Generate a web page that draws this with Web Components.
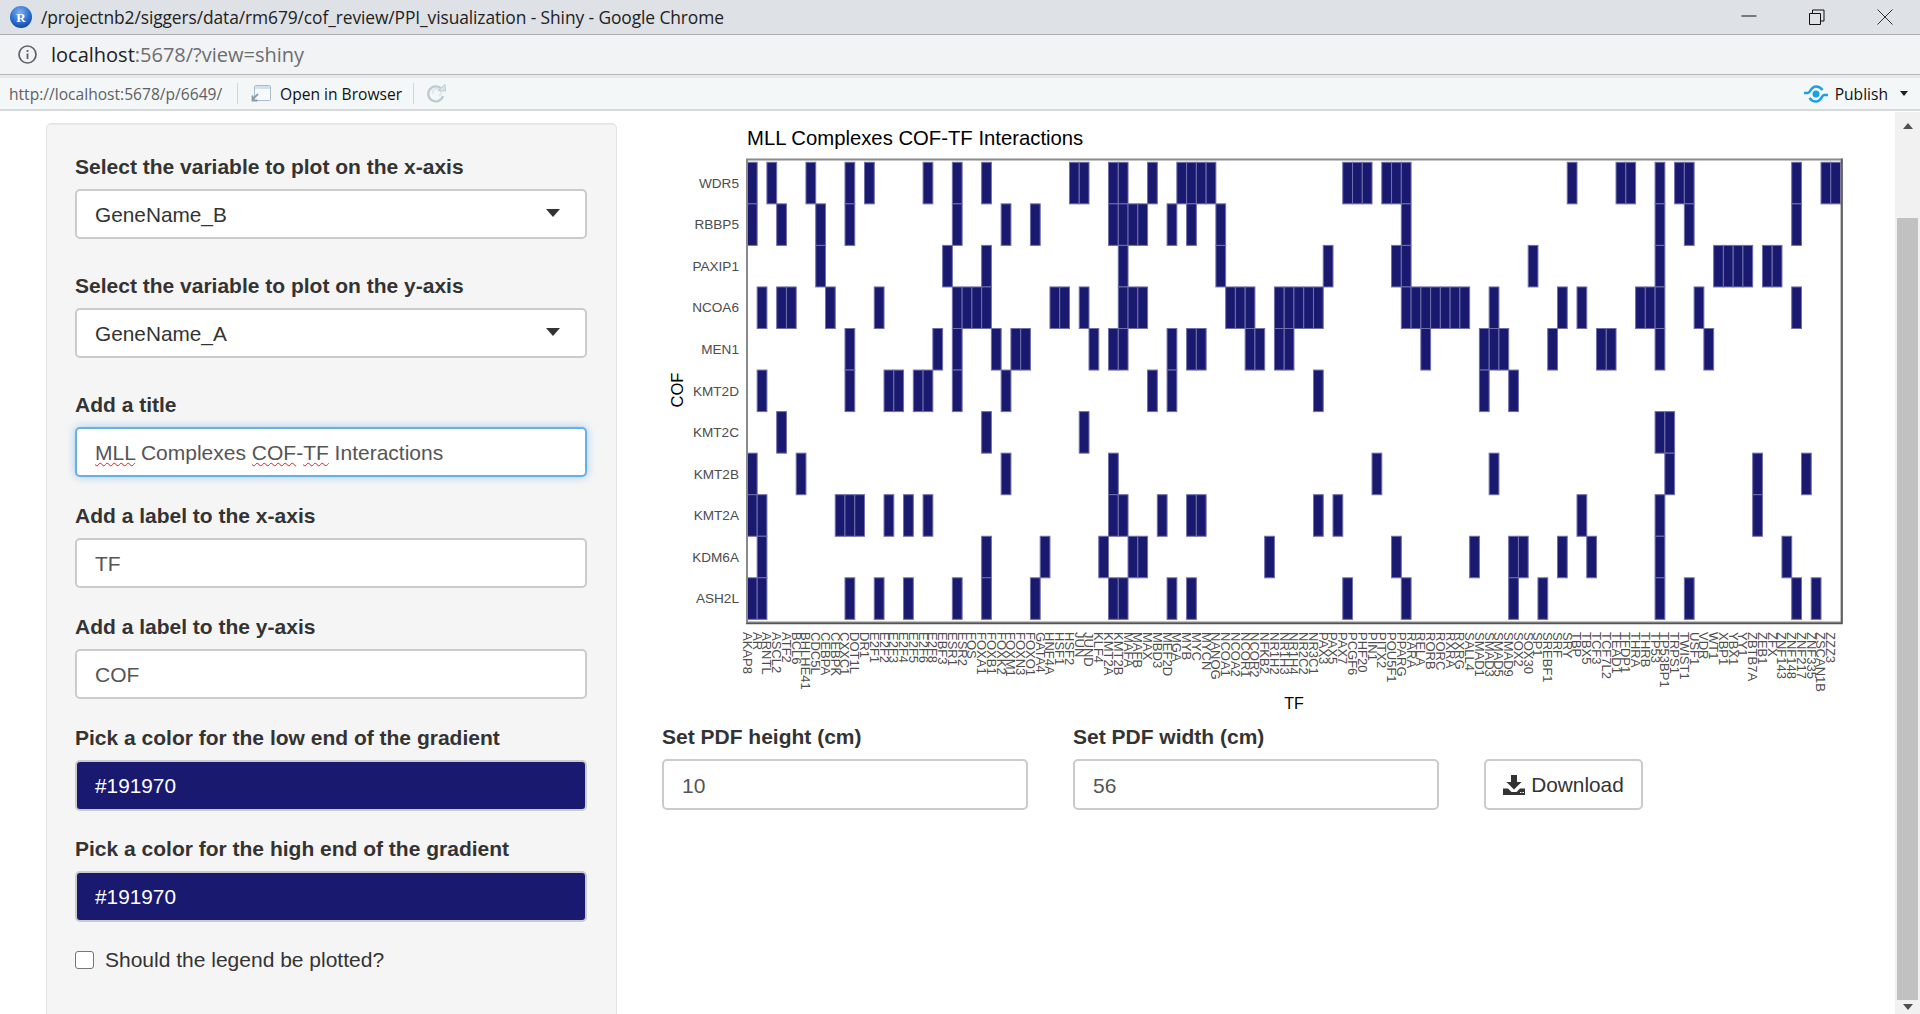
<!DOCTYPE html>
<html>
<head>
<meta charset="utf-8">
<title>Shiny</title>
<style>
    html, body { margin: 0; height: 100%; overflow: hidden; background: #fff; }
    body { display: flex; flex-direction: column; font-family: "Liberation Sans", Arial, sans-serif; }
</style>
</head>
<body>
<window-titlebar>/projectnb2/siggers/data/rm679/cof_review/PPI_visualization - Shiny - Google Chrome</window-titlebar>
<address-bar></address-bar>
<viewer-toolbar></viewer-toolbar>
<shiny-page>
    <side-panel>
        <form-field label="Select the variable to plot on the x-axis" gap="33"><select-box>GeneName_B</select-box></form-field>
        <form-field label="Select the variable to plot on the y-axis" gap="33"><select-box>GeneName_A</select-box></form-field>
        <form-field label="Add a title"><text-box focused><span class="sp">MLL</span> Complexes <span class="sp">COF</span>-<span class="sp">TF</span> Interactions</text-box></form-field>
        <form-field label="Add a label to the x-axis"><text-box>TF</text-box></form-field>
        <form-field label="Add a label to the y-axis"><text-box>COF</text-box></form-field>
        <form-field label="Pick a color for the low end of the gradient" gap="24"><color-box>#191970</color-box></form-field>
        <form-field label="Pick a color for the high end of the gradient" gap="24"><color-box>#191970</color-box></form-field>
        <check-box>Should the legend be plotted?</check-box>
    </side-panel>
    <main-panel>
        <heat-plot></heat-plot>
        <pdf-controls></pdf-controls>
    </main-panel>
    <page-scrollbar></page-scrollbar>
</shiny-page>

<script>
// chrome window title row
class WindowTitlebar extends HTMLElement {
    constructor() {
        super();
        this.attachShadow({ mode: 'open' });
        this.shadowRoot.innerHTML = `
            <style>
                :host { display: flex; align-items: center; height: 34px; background: #dee1e6; border-bottom: 1px solid #adadad; flex: none; color: #222; font: 17.400px "Open Sans", sans-serif; }
                svg { flex: none; display: block; }
                .logo { margin: 0 8px 0 9px; }
                .text { flex: 1; white-space: nowrap; letter-spacing: -0.1px; }
                .btns { display: flex; gap: 52px; padding-right: 27px; align-items: center; }
            </style>
            <svg class="logo" width="24" height="24" viewBox="0 0 24 24">
                <defs><radialGradient id="g" cx="45%" cy="30%" r="75%"><stop offset="0" stop-color="#7fb2ee"/><stop offset=".6" stop-color="#2a6fd0"/><stop offset="1" stop-color="#123f96"/></radialGradient></defs>
                <circle cx="12" cy="12" r="11" fill="url(#g)"/>
                <text x="12" y="16.500" text-anchor="middle" font-family="Liberation Serif" font-weight="bold" font-size="13" fill="#fff">R</text>
            </svg>
            <span class="text"><slot></slot></span>
            <div class="btns">
                <svg width="16" height="16" viewBox="0 0 16 16"><path d="M0.500 7h15" stroke="#111" fill="none"/></svg>
                <svg width="16" height="16" viewBox="0 0 16 16"><path d="M0.500 4.500h11v11h-11zM3.500 4.500v-3.500h11.500v11h-3.500" stroke="#111" fill="none"/></svg>
                <svg width="16" height="16" viewBox="0 0 16 16"><path d="M0.500 0.500l15 15M15.500 0.500l-15 15" stroke="#333" fill="none"/></svg>
            </div>`;
    }
}

class AddressBar extends HTMLElement {
    constructor() {
        super();
        this.attachShadow({ mode: 'open' });
        this.shadowRoot.innerHTML = `
            <style>
                :host { display: flex; align-items: center; height: 39px; background: #f1f3f4; border-bottom: 1px solid #b4b4b4; flex: none; font: 20px "Open Sans", sans-serif; color: #6b6e70; }
                svg { margin: 0 13px 0 17px; flex: none; }
                b { font-weight: 400; color: #202124; }
            </style>
            <svg width="21" height="21" viewBox="0 0 21 21"><circle cx="10.500" cy="10.500" r="8.500" fill="none" stroke="#5f6368" stroke-width="1.700"/><path d="M10.500 9.500v5.500M10.500 6v2" stroke="#5f6368" stroke-width="1.800"/></svg>
            <span><b>localhost</b>:5678/?view=shiny</span>`;
    }
}

// rstudio viewer strip
class ViewerToolbar extends HTMLElement {
    constructor() {
        super();
        this.attachShadow({ mode: 'open' });
        this.shadowRoot.innerHTML = `
            <style>
                :host { display: flex; align-items: center; height: 31px; background: #f4f7f8; border-top: 3px solid #e7e9ea; border-bottom: 2px solid #d6d9da; margin-bottom: 1px; flex: none; font: 15.600px "Open Sans", sans-serif; color: #111; white-space: nowrap; }
                .url { color: #5d6164; margin-left: 9px; width: 228px; }
                .sep { width: 1px; height: 21px; background: #d3d6d8; flex: none; }
                .open { display: flex; align-items: center; gap: 9px; margin-left: 11px; width: 164px; }
                svg { flex: none; display: block; }
                .re { margin-left: 11px; }
                .pub { margin-left: auto; display: flex; align-items: center; padding-right: 12px; }
                .pub span { margin: 0 12px 0 7px; }
                .caret { width: 0; height: 0; border: 4px solid transparent; border-top: 5px solid #222; border-bottom: 0; }
            </style>
            <span class="url">http://localhost:5678/p/6649/</span>
            <span class="sep"></span>
            <span class="open">
                <svg width="22" height="18" viewBox="0 0 22 18"><rect x="5.500" y="0.500" width="16" height="15" rx="1" fill="#f7fafc" stroke="#a9bccb"/><path d="M6 1h15v3H6z" fill="#cfe0ee"/><path d="M9 9L3 15M3.500 10.500v5h5" fill="none" stroke="#8b9aa6" stroke-width="1.800"/></svg>
                <span>Open in Browser</span>
            </span>
            <span class="sep"></span>
            <svg class="re" width="22" height="19" viewBox="0 0 22 19"><path d="M16.500 5A7.500 7.500 0 1 0 18 12" fill="none" stroke="#bccad4" stroke-width="2.400"/><path d="M8 9.500a4 4 0 1 1 6 2.500" fill="none" stroke="#dbe4ea" stroke-width="1.500"/><path d="M13 6.500L20.500 7 20 0.500z" fill="#dce5eb" stroke="#bccad4"/></svg>
            <div class="pub">
                <svg width="24" height="20" viewBox="0 0 24 20"><path d="M0 9H4C6.500 9 6.500 2.500 12 2.500C15 2.500 17 4 18.500 6M24 11H20C17.500 11 17.500 17.500 12 17.500C9 17.500 7 16 5.500 14" fill="none" stroke="#1ba0e8" stroke-width="2.500"/><circle cx="12" cy="10" r="3.500" fill="#1ba0e8"/></svg>
                <span>Publish</span>
                <i class="caret"></i>
            </div>`;
    }
}

class ShinyPage extends HTMLElement {
    constructor() {
        super();
        this.attachShadow({ mode: 'open' });
        this.shadowRoot.innerHTML = `
            <style>:host { display: flex; flex: 1; min-height: 0; overflow: hidden; align-items: flex-start; color: #333; font-size: 21px; }</style>
            <slot></slot>`;
    }
}

class SidePanel extends HTMLElement {
    constructor() {
        super();
        this.attachShadow({ mode: 'open' });
        this.shadowRoot.innerHTML = `
            <style>
                :host { display: block; flex: none; box-sizing: border-box; width: 571px; height: 960px; margin: 11px 0 0 46px; padding: 29px 29px 29px 28px; background: #f5f5f5; border: 1px solid #e3e3e3; border-radius: 5px; box-shadow: inset 0 1px 1px rgba(0,0,0,.05); }
            </style>
            <slot></slot>`;
    }
}

class MainPanel extends HTMLElement {
    constructor() {
        super();
        this.attachShadow({ mode: 'open' });
        this.shadowRoot.innerHTML = `
            <style>:host { display: block; flex: none; width: 1233px; margin-left: 45px; }</style>
            <slot></slot>`;
    }
}

// label + control, gap is the space under the control
class FormField extends HTMLElement {
    connectedCallback() {
        if (this.shadowRoot) return;
        this.attachShadow({ mode: 'open' });
        const gap = this.getAttribute('gap') || 25;
        this.shadowRoot.innerHTML = `
            <style>
                :host { display: block; margin-bottom: ${gap}px; }
                label { display: block; height: 28px; line-height: 28px; margin-bottom: 8px; font-weight: 700; font-size: 21px; color: #333; white-space: nowrap; }
            </style>
            <label>${this.getAttribute('label')}</label>
            <slot></slot>`;
    }
}

class SelectBox extends HTMLElement {
    constructor() {
        super();
        this.attachShadow({ mode: 'open' });
        this.shadowRoot.innerHTML = `
            <style>
                :host { display: flex; align-items: center; justify-content: space-between; box-sizing: border-box; height: 50px; padding: 2px 25px 0 18px; background: #fff; border: 2px solid #cbcbcb; border-radius: 5px; color: #333; font-size: 20.800px; }
                i { width: 0; height: 0; border: 7.500px solid transparent; border-top: 8px solid #333; border-bottom: 0; margin-top: -5px; }
            </style>
            <span><slot></slot></span><i></i>`;
    }
}

class TextBox extends HTMLElement {
    constructor() {
        super();
        this.attachShadow({ mode: 'open' });
        this.shadowRoot.innerHTML = `
            <style>
                :host { display: flex; align-items: center; box-sizing: border-box; height: 50px; padding: 2px 18px 0; background: #fff; border: 2px solid #cbcbcb; border-radius: 5px; color: #555; font-size: 21px; white-space: nowrap; }
                :host([focused]) { border-color: #66afe9; box-shadow: 0 0 8px rgba(102,175,233,.6); }
                ::slotted(.sp) { text-decoration: underline wavy #e0201c 1px; text-underline-offset: 2px; }
            </style>
            <span><slot></slot></span>`;
    }
}

class ColorBox extends HTMLElement {
    constructor() {
        super();
        this.attachShadow({ mode: 'open' });
        this.shadowRoot.innerHTML = `
            <style>
                :host { display: flex; align-items: center; box-sizing: border-box; height: 51px; padding: 0 18px; background: #191970; border: 2px solid #cbcbcb; border-radius: 5px; color: #fff; font-size: 20.800px; }
            </style>
            <slot></slot>`;
    }
}

class CheckBox extends HTMLElement {
    constructor() {
        super();
        this.attachShadow({ mode: 'open' });
        this.shadowRoot.innerHTML = `
            <style>
                :host { display: flex; align-items: center; height: 28px; color: #333; font-size: 21px; white-space: nowrap; }
                i { box-sizing: border-box; width: 19px; height: 18px; background: #fff; border: 1.500px solid #767676; border-radius: 3px; margin-right: 11px; flex: none; }
            </style>
            <i></i><span><slot></slot></span>`;
    }
}

// heatmap: rows top to bottom, each row lists the filled TF columns
const ROWS = [
    ['WDR5', [0,2,6,10,12,18,21,24,33,34,37,38,41,44,45,46,47,61,62,63,65,66,67,84,89,90,93,95,96,107,110,111]],
    ['RBBP5', [0,3,7,10,21,26,29,37,38,39,40,43,45,48,67,93,96,107]],
    ['PAXIP1', [7,20,24,38,48,59,66,67,80,93,99,100,101,102,104,105]],
    ['NCOA6', [1,3,4,8,13,21,22,23,24,31,32,34,38,39,40,49,50,51,54,55,56,57,58,67,68,69,70,71,72,73,76,83,85,91,92,93,97,107]],
    ['MEN1', [10,19,21,25,27,28,35,37,38,43,45,46,51,52,54,55,69,75,76,77,82,87,88,93,98]],
    ['KMT2D', [1,10,14,15,17,18,21,26,41,43,58,75,78]],
    ['KMT2C', [3,24,34,93,94]],
    ['KMT2B', [0,5,26,37,64,76,94,103,108]],
    ['KMT2A', [0,1,9,10,11,14,16,18,37,38,42,45,46,58,60,85,93,103]],
    ['KDM6A', [1,24,30,36,39,40,53,66,74,78,79,83,86,93,106]],
    ['ASH2L', [0,1,10,13,16,21,24,29,37,38,43,45,61,67,78,81,93,96,107,109]]
];

const TFS = ['AKAP8','AR','ARNTL','ASCL2','ATF2','BCL6','BHLHE41','CDC5L','CEBPA','CEBPK','CXXC1','DOT1L','DR1',
    'E2F1','E2F2','E2F3','E2F4','E2F5','E2F6','E2F8','EBF3','ESR1','ESR2','FOS','FOXA1','FOXB1','FOXK2','FOXM1','FOXN3','FOXO1',
    'GATA4','HNF4A','HSF1','HSF2','JUN','JUND','KLF4','KMT2A','KMT2B','MAFA','MAFB','MAX','MBD3','MEF2D','MGA','MYB','MYC','MYCN',
    'NANOG','NCOA1','NCOA2','NCOR1','NCOR2','NFKB2','NR1H2','NR1H3','NR1H4','NR2C2','NR3C1','PAX3','PAX5','PAX7','PCGF6','PHF20','PIN1','PITX2',
    'POU5F1','PPARG','RARA','RELA','RORB','RORC','RXRA','RXRG','SALL4','SMAD1','SMAD3','SMAD5','SMAD9','SOX2','SOX30','SP1','SREBF1','SRF','SRY',
    'TBP','TBX5','TCF3','TCF7L2','TEAD1','TFDP1','THRA','THRB','TP53','TP53BP1','TRPS1','TWIST1','USF1','VDR','WT1','XBP1','YBX1','YY1',
    'ZBTB7A','ZEB1','ZFX','ZNF143','ZNF148','ZNF217','ZNF335','ZSCAN1B','ZZZ3'];

class HeatPlot extends HTMLElement {
    constructor() {
        super();
        this.attachShadow({ mode: 'open' });
    }

    connectedCallback() {
        const x0 = 747.4, y0 = 162.3, cw = 9.76, rh = 41.55;
        let cells = '', rowText = '', colText = '';
        ROWS.forEach(([name, cols], r) => {
            const y = y0 + r * rh;
            rowText += `<text x="739" y="${(y + rh / 2 + 4.7).toFixed(1)}" text-anchor="end">${name}</text>`;
            cols.forEach(c => {
                cells += `<rect x="${(x0 + c * cw).toFixed(2)}" y="${y.toFixed(2)}" width="${cw}" height="${rh}"/>`;
            });
        });
        TFS.forEach((name, c) => {
            const x = x0 + (c + 0.5) * cw - 9.4;
            colText += `<text transform="translate(${x.toFixed(2)} 632) rotate(90)">${name}</text>`;
        });
        this.shadowRoot.innerHTML = `
            <style>
                :host { display: block; height: 611px; }
                svg { display: block; font-family: "Liberation Sans", Arial, sans-serif; }
                .cells rect { fill: #191970; stroke: #6f6fab; stroke-width: 1; }
                .ticks { font-size: 13.600px; fill: #4d4d4d; }
            </style>
            <svg width="1233" height="611" viewBox="662 112 1233 611">
                <text x="747" y="145" font-size="20.300" fill="#000">MLL Complexes COF-TF Interactions</text>
                <g class="cells">${cells}</g>
                <path d="M747 159.500H1841.500V622.500H747Z" fill="none" stroke="#8a8a8a" stroke-width="2"/>
                <path d="M1842 158.500V623.500H746" fill="none" stroke="#555" stroke-width="1.500"/>
                <g class="ticks">${rowText}</g>
                <g class="ticks" style="font-size:13px">${colText}</g>
                <text transform="translate(683 390) rotate(-90)" text-anchor="middle" font-size="16.500" fill="#000">COF</text>
                <text x="1294" y="709" text-anchor="middle" font-size="16" fill="#000">TF</text>
            </svg>`;
    }
}

class PdfControls extends HTMLElement {
    constructor() {
        super();
        this.attachShadow({ mode: 'open' });
        this.shadowRoot.innerHTML = `
            <style>
                :host { display: flex; align-items: flex-end; gap: 45px; }
                form-field { width: 366px; margin: 0; }
                text-box { height: 51px; }
                button { box-sizing: border-box; width: 159px; height: 51px; display: flex; align-items: center; justify-content: center; gap: 6px; padding: 0; background: #fff; border: 2px solid #cbcbcb; border-radius: 5px; color: #333; font: 20.800px "Liberation Sans", sans-serif; }
                svg { display: block; }
            </style>
            <form-field label="Set PDF height (cm)" gap="0"><text-box>10</text-box></form-field>
            <form-field label="Set PDF width (cm)" gap="0"><text-box>56</text-box></form-field>
            <button>
                <svg width="22" height="20" viewBox="0 0 22 20"><path d="M8 0h6v7h4.500L11 14.500 3.500 7H8zM0 13.500h5L8.500 17h5L17 13.500h5V20H0z" fill="#333"/><path d="M17 17.500h1.500M19.500 17.500H21" stroke="#fff"/></svg>
                <span>Download</span>
            </button>`;
    }
}

class PageScrollbar extends HTMLElement {
    constructor() {
        super();
        this.attachShadow({ mode: 'open' });
        this.shadowRoot.innerHTML = `
            <style>
                :host { display: flex; flex-direction: column; align-items: center; flex: none; width: 25px; height: 902px; margin-left: auto; background: #f1f1f1; padding-top: 11px; box-sizing: border-box; }
                .up, .down { width: 0; height: 0; border: 5.500px solid transparent; }
                .up { border-bottom: 6px solid #505050; border-top: 0; }
                .down { border-top: 6px solid #505050; border-bottom: 0; margin-top: 4px; }
                .thumb { width: 21px; height: 782px; background: #c1c1c1; margin-top: 89px; }
            </style>
            <i class="up"></i><div class="thumb"></div><i class="down"></i>`;
    }
}

customElements.define('form-field', FormField);
customElements.define('select-box', SelectBox);
customElements.define('text-box', TextBox);
customElements.define('color-box', ColorBox);
customElements.define('check-box', CheckBox);
customElements.define('window-titlebar', WindowTitlebar);
customElements.define('address-bar', AddressBar);
customElements.define('viewer-toolbar', ViewerToolbar);
customElements.define('shiny-page', ShinyPage);
customElements.define('side-panel', SidePanel);
customElements.define('main-panel', MainPanel);
customElements.define('heat-plot', HeatPlot);
customElements.define('pdf-controls', PdfControls);
customElements.define('page-scrollbar', PageScrollbar);
</script>
</body>
</html>
